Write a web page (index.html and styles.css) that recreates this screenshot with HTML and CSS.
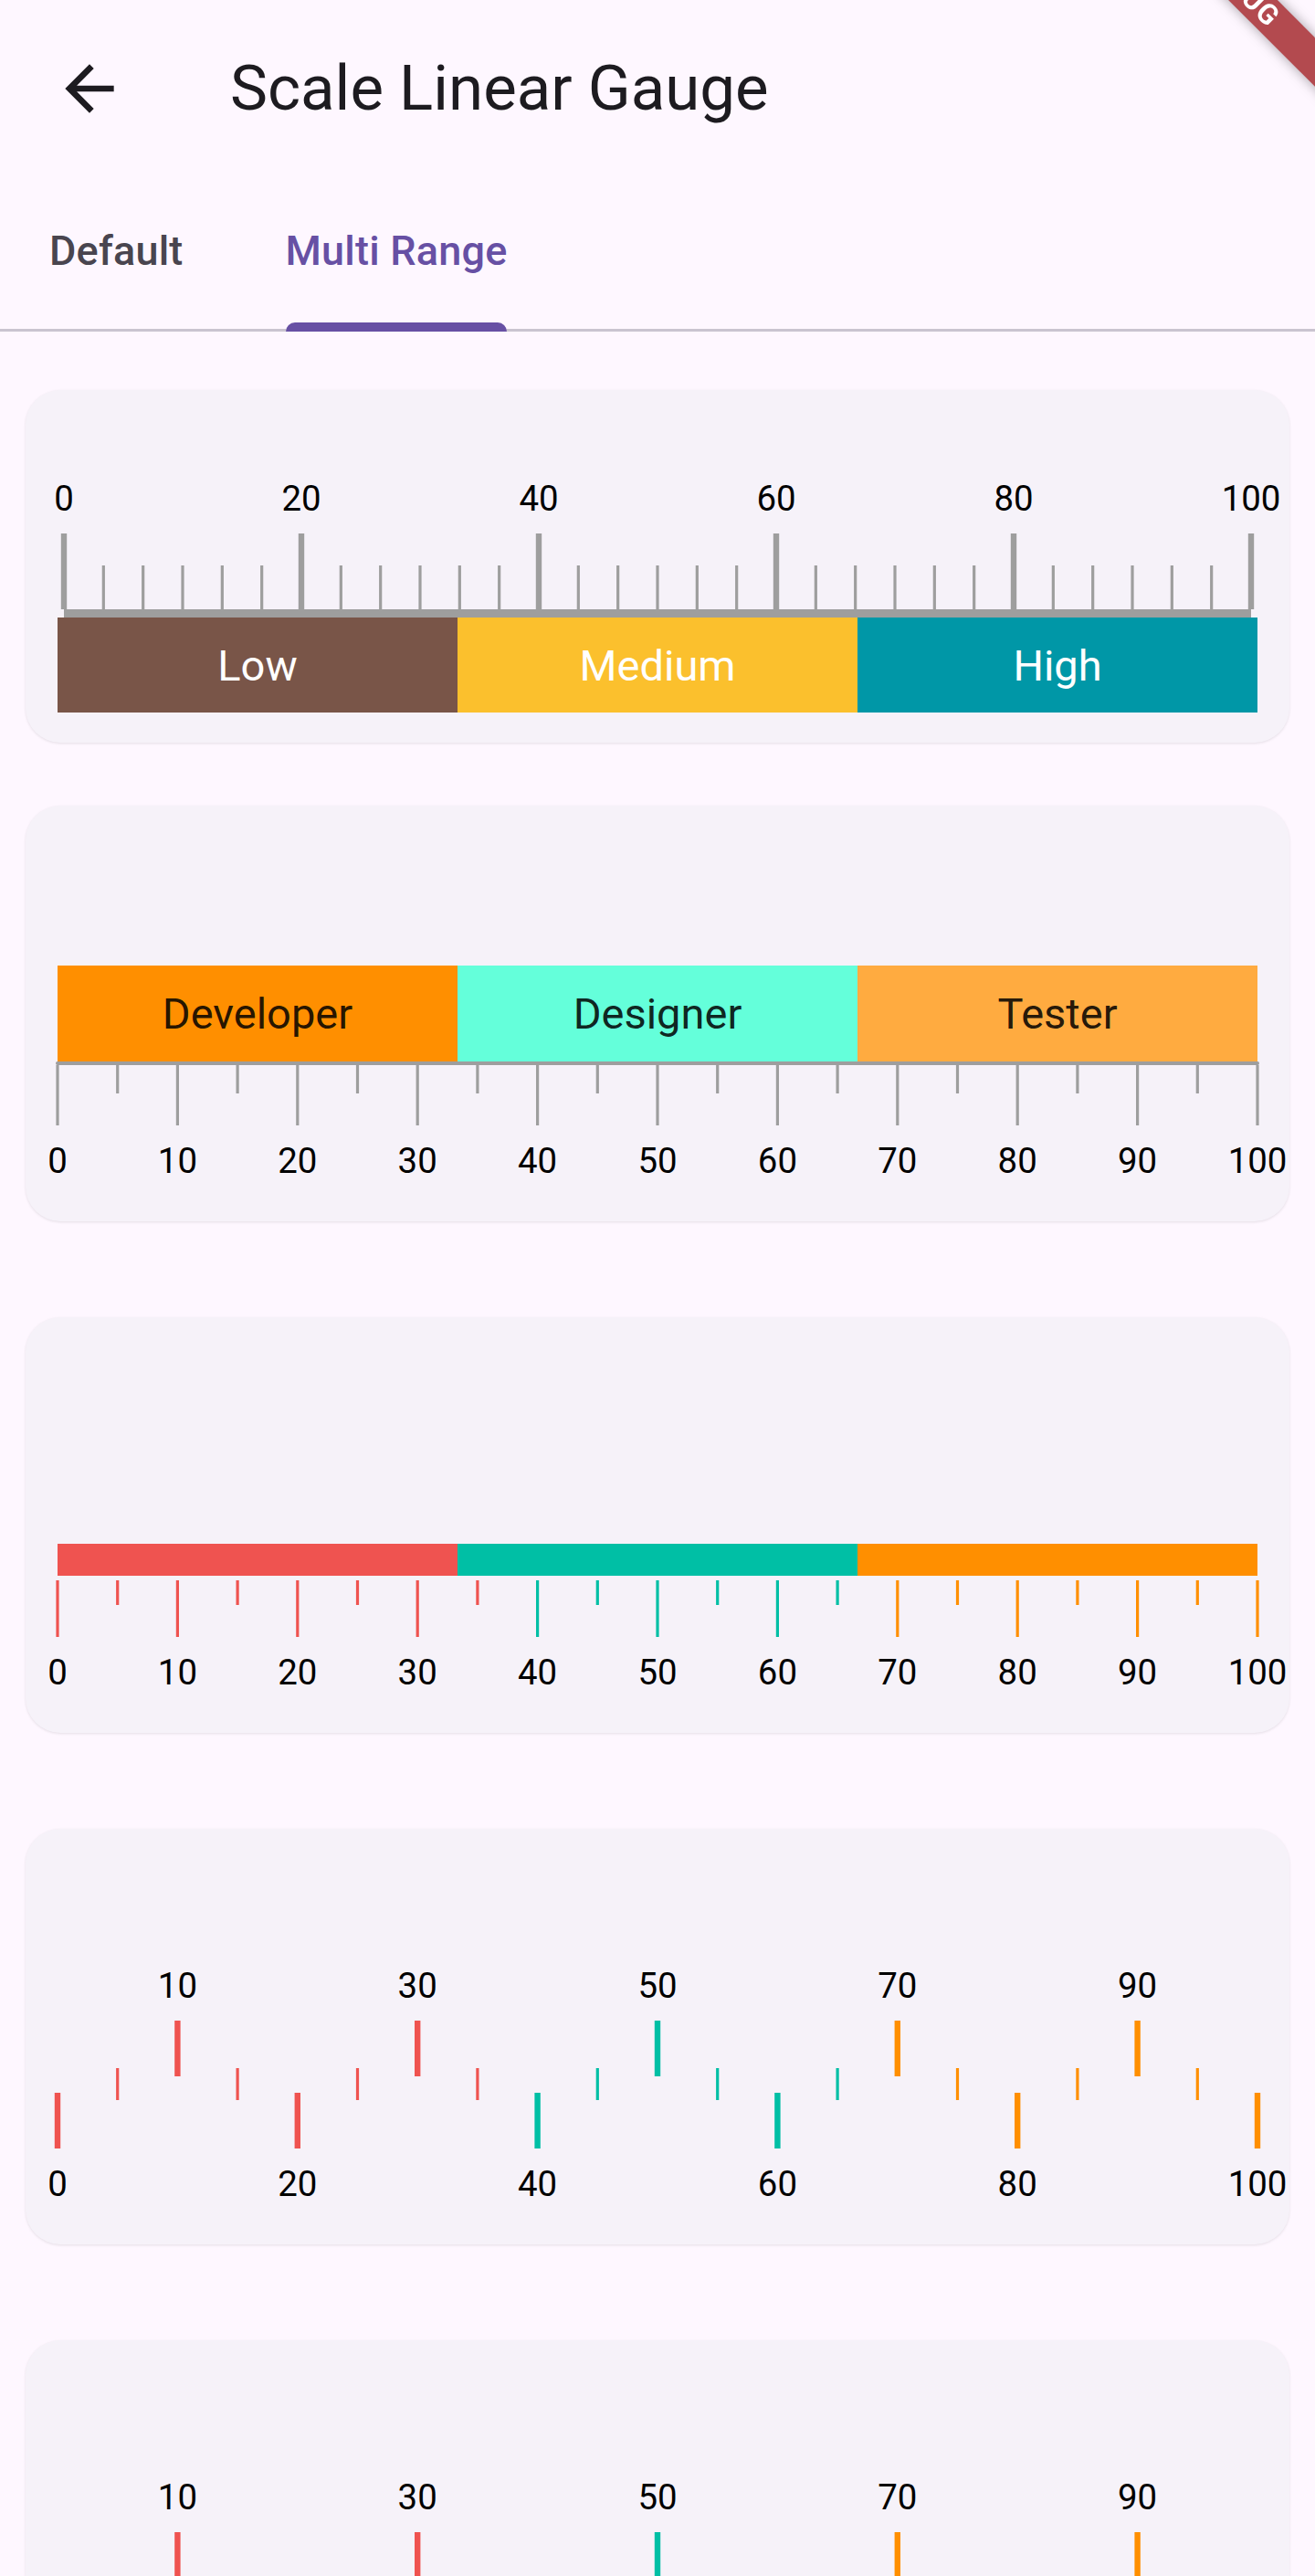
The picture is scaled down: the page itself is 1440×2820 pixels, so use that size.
FILE: index.html
```html
<!DOCTYPE html>
<html lang="en">
<head>
  <meta charset="UTF-8">
  <meta name="viewport" content="width=device-width, initial-scale=1.0">
  <title>Scale Linear Gauge</title>
  <link rel="stylesheet" href="styles.css">
</head>
<body>
  <header class="app-bar">
    <button class="back-button" aria-label="Back">
      <svg viewBox="0 0 24 24" width="80" height="80">
        <path d="M20 11H7.83l5.59-5.59L12 4l-8 8 8 8 1.41-1.41L7.83 13H20v-2z" fill="#1d1b20"/>
      </svg>
    </button>
    <h1 class="title">Scale Linear Gauge</h1>
  </header>

  <!-- Tabs -->
  <nav class="tabs">
    <div class="tab">Default</div>
    <div class="tab active">Multi Range</div>
  </nav>

  <main class="gauge-list">
    <!-- Ruler with labelled ranges -->
    <section class="card card-ruler">
      <svg class="scale" data-type="ruler" width="1314" height="249"></svg>
      <div class="ranges ranges-tall">
        <div class="range" style="background-color: #795548;">Low</div>
        <div class="range" style="background-color: #fbc02d;">Medium</div>
        <div class="range" style="background-color: #0097a7;">High</div>
      </div>
    </section>

    <!-- Team ranges -->
    <section class="card card-team">
      <div class="ranges ranges-tall ranges-dark">
        <div class="range" style="background-color: #ff8f00;">Developer</div>
        <div class="range" style="background-color: #64ffda;">Designer</div>
        <div class="range" style="background-color: #ffab40;">Tester</div>
      </div>
      <svg class="scale" data-type="team" width="1314" height="140"></svg>
    </section>

    <!-- Coloured ticks under a thin bar -->
    <section class="card card-colored">
      <div class="ranges ranges-thin">
        <div class="range" style="background-color: #ef5350;"></div>
        <div class="range" style="background-color: #00bfa5;"></div>
        <div class="range" style="background-color: #ff8f00;"></div>
      </div>
      <svg class="scale" data-type="colored" width="1314" height="137"></svg>
    </section>

    <!-- Alternating labels -->
    <section class="card card-split">
      <svg class="scale" data-type="split" width="1314" height="420"></svg>
    </section>

    <section class="card card-split">
      <svg class="scale" data-type="split" width="1314" height="420"></svg>
    </section>
  </main>

  <div class="debug-wrap">
    <div class="debug-banner">DEBUG</div>
  </div>

  <script src="script.js"></script>
</body>
</html>
```

FILE: styles.css
```css
/* Base */
body {
  margin: 0;
  padding: 0;
  font-family: Roboto, "Liberation Sans", Arial, sans-serif;
  background-color: #fef7ff;
  color: #1d1b20;
  overflow-x: hidden;
}

/* App bar */
.app-bar {
  display: flex;
  align-items: center;
  height: 194px;
  padding-left: 58px;
}

.back-button {
  display: flex;
  width: 80px;
  height: 80px;
  padding: 0;
  border: none;
  background: none;
}

.title {
  margin: 0 0 0 114px;
  font-size: 69px;
  font-weight: 400;
  line-height: 1.172;
}

/* Tabs */
.tabs {
  display: flex;
  gap: 112px;
  height: 166px;
  padding-left: 54px;
  border-bottom: 3px solid #cac4d0;
}

.tab {
  position: relative;
  padding-top: 55px;
  font-size: 45px;
  font-weight: 500;
  line-height: 1.172;
  letter-spacing: 0.2px;
  color: #49454f;
}

.tab.active {
  color: #6750a4;
}

.tab.active::after {
  content: "";
  position: absolute;
  left: 0;
  right: 0;
  bottom: -3px;
  height: 10px;
  background-color: #6750a4;
  border-radius: 10px 10px 0 0;
}

/* Cards */
.gauge-list {
  padding-top: 64px;
}

.card {
  box-sizing: border-box;
  margin: 0 28px 105px;
  padding: 0 35px;
  background-color: #f6f2f9;
  border-radius: 38px;
  box-shadow: 0 1px 3px rgba(0, 0, 0, 0.1);
}

.card-ruler {
  height: 386px;
  margin-bottom: 69px;
}

.card-team {
  height: 455px;
  padding-top: 175px;
}

.card-colored {
  height: 455px;
  padding-top: 248px;
}

.card-split {
  height: 455px;
}

.scale {
  display: block;
  overflow: visible;
}

.scale-label {
  font-family: Roboto, "Liberation Sans", Arial, sans-serif;
  font-size: 38.4px;
  fill: #000;
  text-anchor: middle;
}

/* Range bars */
.ranges {
  display: flex;
}

.range {
  flex: 1;
  display: flex;
  align-items: center;
  justify-content: center;
  font-size: 47px;
  color: #fff;
}

.ranges-tall {
  height: 104px;
}

.card-team .ranges-tall {
  height: 105px;
}

.ranges-dark .range {
  color: rgba(0, 0, 0, 0.87);
}

.ranges-thin {
  height: 35px;
}

/* Debug banner */
.debug-wrap {
  position: fixed;
  top: 0;
  right: 0;
  width: 200px;
  height: 200px;
  overflow: hidden;
  pointer-events: none;
}

.debug-banner {
  position: absolute;
  left: -81px;
  top: -32px;
  width: 400px;
  height: 38px;
  line-height: 38px;
  text-align: center;
  font-size: 31px;
  font-weight: 700;
  letter-spacing: 1px;
  color: #fff;
  background-color: rgba(160, 30, 35, 0.8);
  box-shadow: 0 0 14px rgba(0, 0, 0, 0.35);
  transform: rotate(45deg);
}
```

FILE: script.js
```js
// Builds tick marks and labels for every linear gauge
const SVG_NS = 'http://www.w3.org/2000/svg';
const GREY = '#9e9e9e';

function addLine(svg, x, y1, y2, width, color) {
  const line = document.createElementNS(SVG_NS, 'line');
  line.setAttribute('x1', x);
  line.setAttribute('x2', x);
  line.setAttribute('y1', y1);
  line.setAttribute('y2', y2);
  line.setAttribute('stroke', color);
  line.setAttribute('stroke-width', width);
  svg.appendChild(line);
}

function addLabel(svg, x, y, text) {
  const label = document.createElementNS(SVG_NS, 'text');
  label.setAttribute('x', x);
  label.setAttribute('y', y);
  label.setAttribute('class', 'scale-label');
  label.textContent = text;
  svg.appendChild(label);
}

function rangeColor(value) {
  if (value <= 35) return '#ef5350';
  if (value <= 65) return '#00bfa5';
  return '#ff8f00';
}

function drawRuler(svg) {
  // 5 minor ticks between each pair of major ticks
  for (let i = 0; i <= 30; i++) {
    const x = 7 + i * 1300 / 30;
    if (i % 6 === 0) {
      addLine(svg, x, 157, 240, 6.4, GREY);
      addLabel(svg, x, 132, i / 6 * 20);
    } else {
      addLine(svg, x, 192, 240, 3.2, GREY);
    }
  }
  const axis = document.createElementNS(SVG_NS, 'rect');
  axis.setAttribute('x', 7);
  axis.setAttribute('y', 240);
  axis.setAttribute('width', 1300);
  axis.setAttribute('height', 9.6);
  axis.setAttribute('fill', GREY);
  svg.appendChild(axis);
}

function drawTeam(svg) {
  const axis = document.createElementNS(SVG_NS, 'line');
  axis.setAttribute('x1', 0);
  axis.setAttribute('x2', 1314);
  axis.setAttribute('y1', 2);
  axis.setAttribute('y2', 2);
  axis.setAttribute('stroke', GREY);
  axis.setAttribute('stroke-width', 4);
  axis.setAttribute('stroke-linecap', 'round');
  svg.appendChild(axis);

  for (let v = 0; v <= 100; v += 5) {
    const x = v * 13.14;
    if (v % 10 === 0) {
      addLine(svg, x, 4, 70, 3.2, GREY);
      addLabel(svg, x, 122, v);
    } else {
      addLine(svg, x, 4, 35, 3.2, GREY);
    }
  }
}

function drawColored(svg) {
  for (let v = 0; v <= 100; v += 5) {
    const x = v * 13.14;
    if (v % 10 === 0) {
      addLine(svg, x, 5, 67, 3.2, rangeColor(v));
      addLabel(svg, x, 119, v);
    } else {
      addLine(svg, x, 5, 32, 3.2, rangeColor(v));
    }
  }
}

function drawSplit(svg) {
  for (let v = 0; v <= 100; v += 5) {
    const x = v * 13.14;
    if (v % 20 === 0) {
      addLine(svg, x, 289, 350, 6.4, rangeColor(v));
      addLabel(svg, x, 402, v);
    } else if (v % 10 === 0) {
      addLine(svg, x, 210, 271, 6.4, rangeColor(v));
      addLabel(svg, x, 185, v);
    } else {
      addLine(svg, x, 262, 297, 3.2, rangeColor(v));
    }
  }
}

const drawers = {
  ruler: drawRuler,
  team: drawTeam,
  colored: drawColored,
  split: drawSplit
};

document.querySelectorAll('.scale').forEach(svg => {
  drawers[svg.dataset.type](svg);
});
```
